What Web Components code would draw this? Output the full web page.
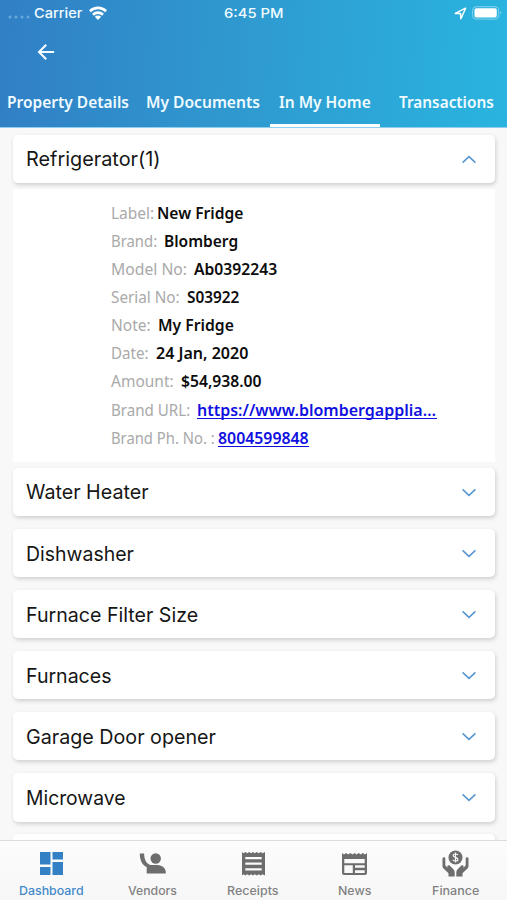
<!DOCTYPE html>
<html lang="en">
<head>
<meta charset="utf-8">
<title>In My Home</title>
<style>
html,body{margin:0;height:100%;overflow:hidden}
body{background:#f8f8f8}
</style>
</head>
<body>
<home-app></home-app>
<script>
// Text run set to a given advance width in pixels.
customElements.define('fit-text', class extends HTMLElement {
  connectedCallback() {
    const r = this.attachShadow({mode: 'open'});
    r.innerHTML = `<style>:host{display:inline-block;white-space:pre;width:${this.getAttribute('w')}px}
      span{display:inline-block;transform-origin:0 50%}</style><span><slot></slot></span>`;
    const s = r.querySelector('span');
    s.style.transform = `scaleX(${this.getAttribute('w') / s.offsetWidth})`;
  }
});

customElements.define('status-bar', class extends HTMLElement {
  connectedCallback() {
    this.attachShadow({mode: 'open'}).innerHTML = `<style>
      :host{display:grid;grid-template-columns:224px 1fr auto;align-items:center;height:26px;color:#f2fbff;font:500 13.5px/26px Inter,sans-serif;box-sizing:border-box}
      .l,.r{display:flex;align-items:center}.l{padding-left:8px}.r{padding-right:5px;gap:5px}
      svg{display:block}.dots{margin-right:4px}.wifi{margin-left:6px}</style>
      <div class="l"><svg class="dots" width="22" height="26"><g fill="#68a9da"><circle cx="2" cy="17" r="1.5"/><circle cx="8" cy="17" r="1.5"/><circle cx="14" cy="17" r="1.5"/><circle cx="20" cy="17" r="1.5"/></g></svg>
      <fit-text w="48.5">Carrier</fit-text>
      <svg class="wifi" width="18" height="14" viewBox="0 0 18 14"><g fill="none" stroke="#fff" stroke-width="2.7"><path d="M.9 5.2a11.6 11.6 0 0 1 16.2 0"/><path d="M4 8.7a7.2 7.2 0 0 1 10 0"/></g><path d="M5.9 10.7a4.4 4.4 0 0 1 6.2 0L9 13.9z" fill="#fff"/></svg></div>
      <fit-text w="59">6:45 PM</fit-text>
      <div class="r"><svg width="13" height="13" viewBox="0 0 13 13"><path d="M1.2 6.4 11.6 1.2 6.9 11.7 6.5 6.6z" fill="none" stroke="#fff" stroke-width="1.5" stroke-linejoin="round"/></svg>
      <svg width="30" height="14" viewBox="0 0 30 14"><rect x=".7" y=".7" width="26" height="12.4" rx="3.4" fill="none" stroke="#86d3ee"/><rect x="2.5" y="2.3" width="22.3" height="9.3" rx="1.8" fill="#fff"/><path d="M28.4 4.8q2.2 2 0 4z" fill="#86d3ee"/></svg></div>`;
  }
});

customElements.define('tab-item', class extends HTMLElement {
  connectedCallback() {
    this.attachShadow({mode: 'open'}).innerHTML = `<style>
      :host{display:flex;justify-content:center;box-sizing:border-box;height:51px;padding-top:14px;font:600 16px/24px "Noto Sans",sans-serif;color:#f0fbff;border-bottom:3px solid transparent}
      :host([active]){border-color:#fff}</style><slot></slot>`;
  }
});

customElements.define('app-header', class extends HTMLElement {
  connectedCallback() {
    this.attachShadow({mode: 'open'}).innerHTML = `<style>
      :host{display:flex;flex-direction:column;height:128px;flex:none;box-sizing:border-box;border-bottom:1px solid #8fcfee;background:linear-gradient(93deg,#317fc5 0%,#2f9bd0 50%,#29b4df 100%);background-origin:border-box}
      .nav{height:51px;padding:17px 0 0 37px;box-sizing:border-box}
      .tabs{display:grid;grid-template-columns:135px 135px 110px 1fr}
      tab-item:last-child{padding-left:6px}</style>
      <status-bar></status-bar>
      <div class="nav"><svg width="19" height="18" viewBox="0 0 19 18"><path d="M17.2 9H2.3M9.2 1.800 2 9l7.200 7.200" fill="none" stroke="#f4fcff" stroke-width="2.1"/></svg></div>
      <div class="tabs"><tab-item><fit-text w="122">Property Details</fit-text></tab-item><tab-item><fit-text w="114">My Documents</fit-text></tab-item><tab-item active><fit-text w="92">In My Home</fit-text></tab-item><tab-item><fit-text w="95">Transactions</fit-text></tab-item></div>`;
  }
});

customElements.define('accordion-card', class extends HTMLElement {
  connectedCallback() {
    const d = this.hasAttribute('open') ? 'M1.600 7.600 8 1.600l6.400 6' : 'M1.600 1.400 8 7.400l6.400-6';
    this.attachShadow({mode: 'open'}).innerHTML = `<style>
      :host{display:flex;align-items:center;justify-content:space-between;height:48.400px;flex:none;box-sizing:border-box;padding:1px 18px 0 12.500px;background:#fff;border-radius:5px;box-shadow:1px 2px 4px rgba(0,0,0,.17);font:400 20px/48px Inter,sans-serif;color:#161616}
      svg{display:block}</style><slot></slot>
      <svg width="16" height="9" viewBox="0 0 16 9"><path d="${d}" fill="none" stroke="#5796cf" stroke-width="1.500"/></svg>`;
  }
});

customElements.define('detail-row', class extends HTMLElement {
  connectedCallback() {
    const a = n => this.getAttribute(n);
    this.attachShadow({mode: 'open'}).innerHTML = `<style>
      :host{display:flex;height:28.100px;font:400 15.500px/28px "Noto Sans",sans-serif;color:#a9a9a9}
      b{font-weight:600;color:#0c0c0c;margin-left:${a('gap') || 7}px}
      :host([link]) b{color:#1010e0}
      :host([link]) b fit-text{height:22.500px;border-bottom:1.400px solid #1010e0}</style>
      <fit-text w="${a('lw')}">${a('label')}</fit-text><b><fit-text w="${a('vw')}">${a('value')}</fit-text></b>`;
  }
});

customElements.define('detail-panel', class extends HTMLElement {
  connectedCallback() {
    this.attachShadow({mode: 'open'}).innerHTML = `<style>
      :host{display:block;height:273px;flex:none;box-sizing:border-box;margin:5.600px 0 6.200px;padding:10.300px 0 0 98px;background:#fff}</style><slot></slot>`;
  }
});

const ICONS = {
  dash: '<path fill="#3480c5" d="M2 2h10.500v12.500H2zM14.500 2H25v7.500H14.500zM2 17h10.500v8H2zM14.500 12H25v13H14.500z"/>',
  vendor: '<circle cx="16.700" cy="8.500" r="5.200"/><path d="M.8 3.500h4.300c.2 6 2 10.300 6.700 11.500h6.500c5 .3 8.500 3.200 8.500 7.500v1H7.700v-6.500C3.300 15.200.8 10.500.8 3.500z"/>',
  receipt: '<path fill-rule="evenodd" d="M2 2l1.500 1.200L5.400 2l1.900 1.200L9.200 2l1.900 1.200L13 2l1.900 1.200L16.800 2l1.900 1.200L20.600 2l1.900 1.200L25 2v23.500l-2.500-1.200-1.900 1.200-1.900-1.200-1.900 1.200-1.900-1.200-1.900 1.200-1.900-1.200-1.900 1.200-1.900-1.200-1.900 1.200-1.900-1.200L2 25.500zM5.300 7v2.200h16.400V7zM5.300 12.600v2.200h16.400v-2.200zM5.300 18.200v2.200h16.400v-2.200z"/>',
  news: '<path fill-rule="evenodd" d="M1 3l2 1.600L5.100 3l2.100 1.600L9.300 3l2.100 1.600L13.500 3l2.100 1.600L17.700 3l2.100 1.600L21.900 3 24 4.600 26 3v20q0 2-2 2H3q-2 0-2-2zM3.300 9v4.200h20.400V9zM3.300 15.200V23h8.500v-7.800zM14 15.200v2.600h9.700v-2.600zM14 20.200V23h9.700v-2.800z"/>',
  finance: '<circle cx="13.500" cy="7.500" r="7"/><path d="M16 5q-.8-1-2.500-1-2.300 0-2.300 1.600c0 2.300 4.700 1.300 4.700 3.800q0 1.600-2.400 1.600-1.800 0-2.700-1.200M13.500 2.500v10" fill="none" stroke="#f6f6f6" stroke-width="1.200"/><path d="M.5 8.500q0-1.300 1.400-1.300T3.300 8.500v6.800l2.400 2.700c-1.200-1.900.6-3.700 2.200-2.300l3.500 3.600q1.300 1.400 1.300 3.300V26.500H6.500v-3.300L1.500 18.500Q.5 17.500.5 16zM26.500 8.500q0-1.300-1.400-1.300T23.700 8.500v6.800l-2.400 2.700c1.200-1.900-.6-3.700-2.200-2.300l-3.500 3.600q-1.300 1.400-1.300 3.300V26.500H20.500v-3.300l5-4.700q1-1 1-2.500z"/>'
};
customElements.define('nav-item', class extends HTMLElement {
  connectedCallback() {
    this.attachShadow({mode: 'open'}).innerHTML = `<style>
      :host{display:flex;flex-direction:column;align-items:center;padding-top:8.600px;font:500 12px/16px Inter,sans-serif;color:#828282}
      :host([active]){color:#4389cb}
      svg{display:block;margin-bottom:6.400px;fill:#6d6d6d}</style>
      <svg width="27" height="27" viewBox="0 0 27 27">${ICONS[this.getAttribute('icon')]}</svg><slot></slot>`;
  }
});

customElements.define('bottom-nav', class extends HTMLElement {
  connectedCallback() {
    this.attachShadow({mode: 'open'}).innerHTML = `<style>
      :host{display:grid;grid-template-columns:repeat(5,100.900px);flex:none;justify-content:center;height:60px;box-sizing:border-box;border-top:1px solid #dcdcdc;background:linear-gradient(#fcfcfc,#f7f7f7)}</style>
      <nav-item active icon="dash"><fit-text w="65">Dashboard</fit-text></nav-item>
      <nav-item icon="vendor"><fit-text w="49">Vendors</fit-text></nav-item>
      <nav-item icon="receipt"><fit-text w="52">Receipts</fit-text></nav-item>
      <nav-item icon="news"><fit-text w="33">News</fit-text></nav-item>
      <nav-item icon="finance"><fit-text w="47">Finance</fit-text></nav-item>`;
  }
});

customElements.define('home-app', class extends HTMLElement {
  connectedCallback() {
    const cards = [['Water Heater', 123], ['Dishwasher', 108], ['Furnace Filter Size', 172.5], ['Furnaces', 86], ['Garage Door opener', 190], ['Microwave', 99.5]];
    this.attachShadow({mode: 'open'}).innerHTML = `<style>
      :host{display:flex;flex-direction:column;width:507px;height:900px;overflow:hidden;background:#f8f8f8}
      main{flex:1;min-height:0;overflow:hidden;padding:6.600px 12px 0 13px;display:flex;flex-direction:column}
      .list{display:flex;flex-direction:column;gap:12.700px}</style>
      <app-header></app-header>
      <main><accordion-card open><fit-text w="135">Refrigerator(1)</fit-text></accordion-card>
      <detail-panel>
        <detail-row label="Label:" lw="43" gap="3" value="New Fridge" vw="86.500"></detail-row>
        <detail-row label="Brand:" lw="46" value="Blomberg" vw="74"></detail-row>
        <detail-row label="Model No:" lw="76" value="Ab0392243" vw="83"></detail-row>
        <detail-row label="Serial No:" lw="69" value="S03922" vw="52.500"></detail-row>
        <detail-row label="Note:" lw="40" value="My Fridge" vw="76"></detail-row>
        <detail-row label="Date:" lw="38" value="24 Jan, 2020" vw="92"></detail-row>
        <detail-row label="Amount:" lw="63" value="$54,938.00" vw="81"></detail-row>
        <detail-row link label="Brand URL:" lw="79" value="https://www.blombergapplia…" vw="239.500"></detail-row>
        <detail-row link label="Brand Ph. No. :" lw="104" gap="3" value="8004599848" vw="91"></detail-row>
      </detail-panel>
      <div class="list">${cards.map(c => `<accordion-card><fit-text w="${c[1]}">${c[0]}</fit-text></accordion-card>`).join('')}<accordion-card></accordion-card></div></main>
      <bottom-nav></bottom-nav>`;
  }
});
</script>
</body>
</html>
